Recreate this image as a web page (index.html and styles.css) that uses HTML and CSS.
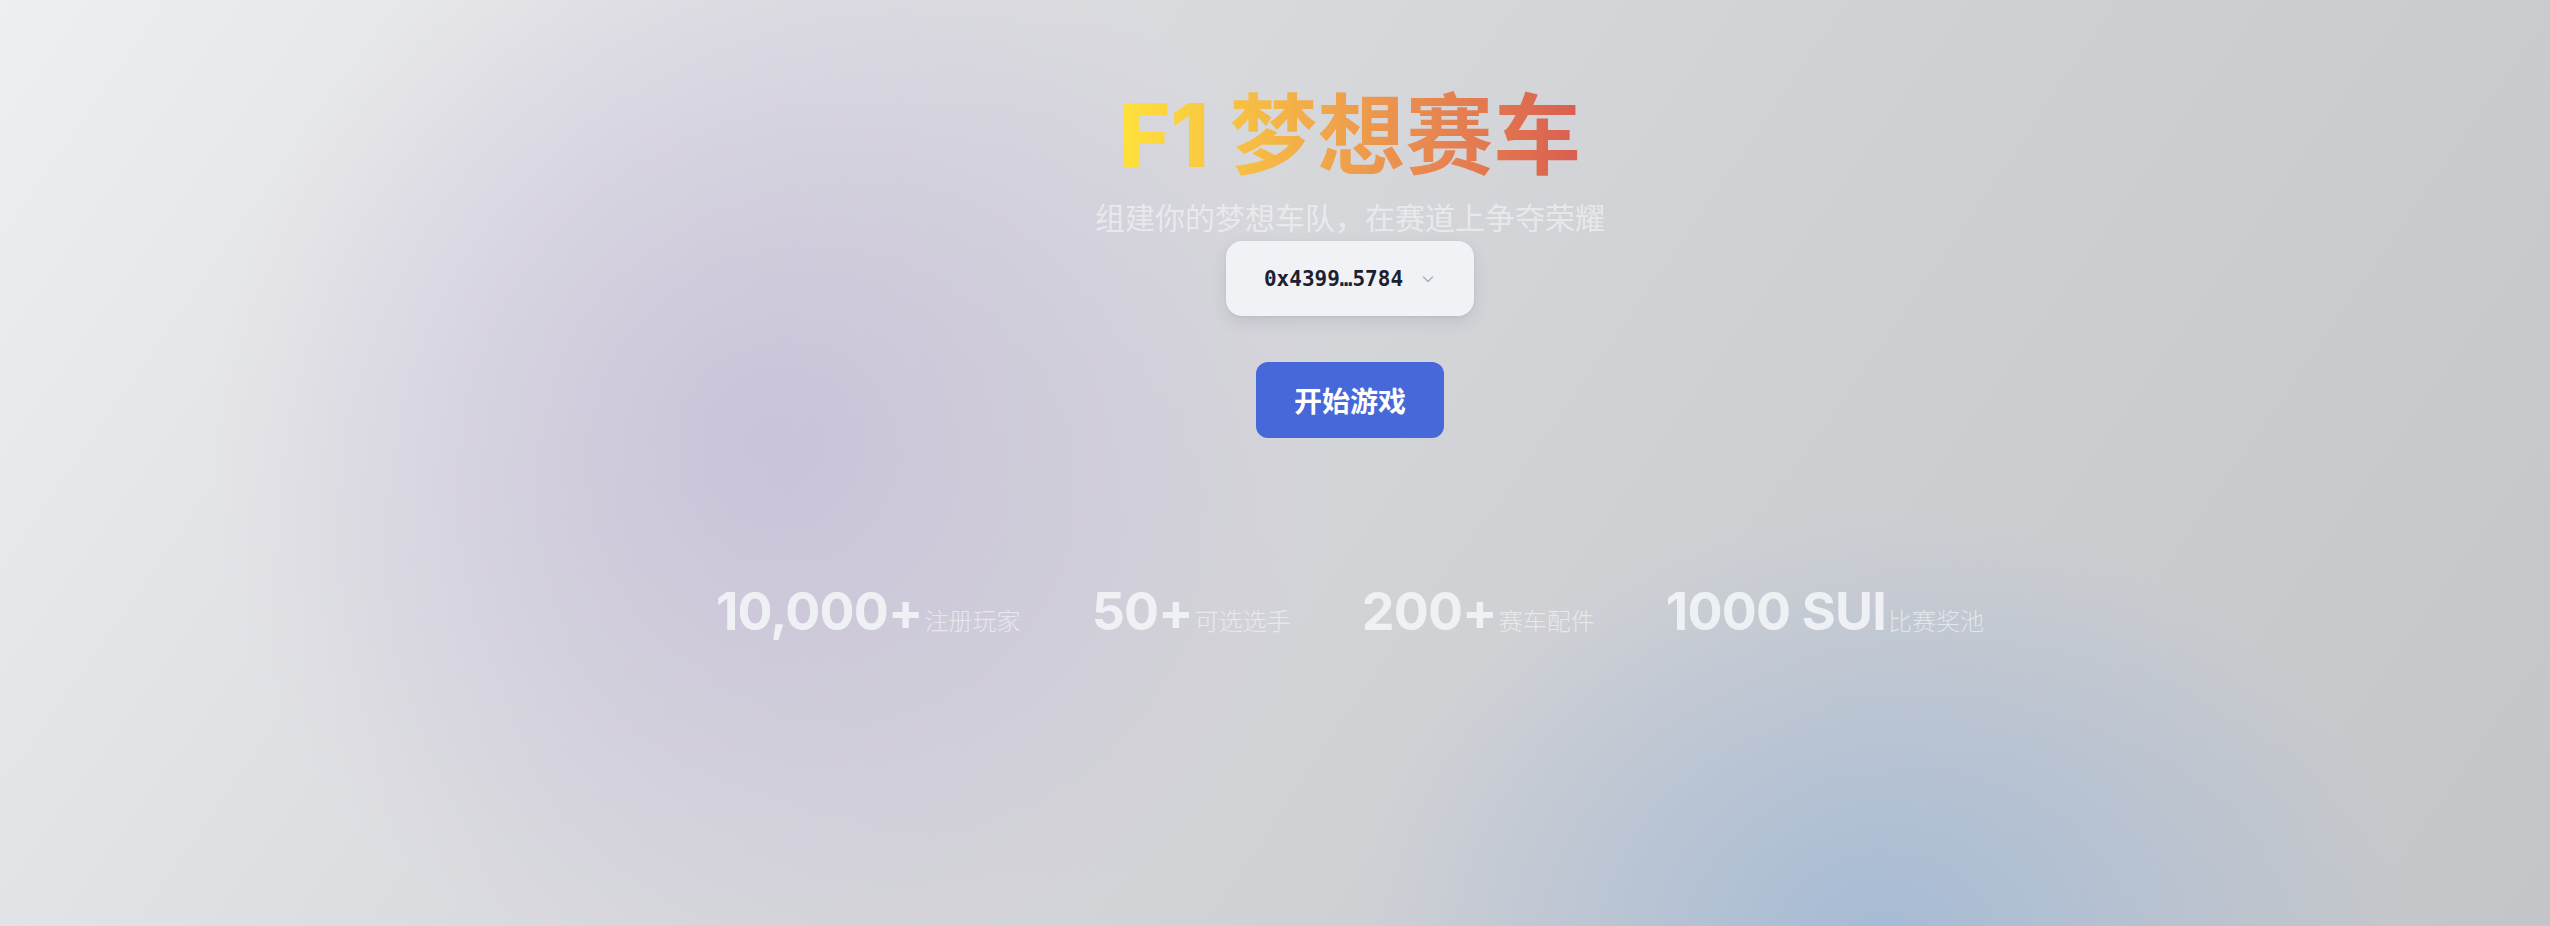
FILE: index.html
```html
<!DOCTYPE html>
<html lang="zh-CN">
<head>
<meta charset="utf-8">
<title>F1 梦想赛车</title>
<link rel="stylesheet" href="styles.css">
</head>
<body>
<main class="page">
  <section class="hero">
    <h1 class="title"><span class="title-en">F1</span> 梦想赛车</h1>
    <p class="subtitle">组建你的梦想车队，在赛道上争夺荣耀</p>
    <button class="wallet" type="button">
      <span class="wallet-addr">0x4399…5784</span>
      <svg class="chevron" width="16" height="16" viewBox="0 0 16 16" fill="none"><path d="M3.5 6l4.5 4.5L12.5 6" stroke="#a6b2c0" stroke-width="1.5" stroke-linecap="round" stroke-linejoin="round"/></svg>
    </button>
    <button class="start" type="button">开始游戏</button>
    <ul class="stats">
      <li class="stat"><span class="stat-num">10,000+</span><span class="stat-label">注册玩家</span></li>
      <li class="stat"><span class="stat-num">50+</span><span class="stat-label">可选选手</span></li>
      <li class="stat"><span class="stat-num">200+</span><span class="stat-label">赛车配件</span></li>
      <li class="stat"><span class="stat-num">1000 SUI</span><span class="stat-label">比赛奖池</span></li>
    </ul>
  </section>
</main>
</body>
</html>
```

FILE: styles.css
```css
* { box-sizing: border-box; }
html, body { margin: 0; padding: 0; }
body {
  width: 2550px;
  height: 926px;
  overflow: hidden;
  font-family: "Noto Sans CJK SC", "Noto Sans", sans-serif;
  background:
    radial-gradient(ellipse 560px 560px at 770px 440px, rgba(194,183,214,0.7), rgba(194,183,214,0) 100%),
    radial-gradient(ellipse 520px 420px at 1880px 940px, rgba(160,184,214,0.85), rgba(160,184,214,0) 100%),
    linear-gradient(125deg, #eeeff1 0%, #dadbdf 35%, #d0d1d5 60%, #c3c5c9 100%);
}
.page {
  height: 926px;
  padding-left: 150px;
}
.hero {
  display: flex;
  flex-direction: column;
  align-items: center;
  padding-top: 68px;
}
.title {
  margin: 0;
  font-size: 88px;
  line-height: 121px;
  font-weight: 700;
  font-family: "Noto Sans CJK SC", sans-serif;
  background: linear-gradient(90deg, #ffe23a 0%, #f4b446 35%, #e98a4f 65%, #d95e50 100%);
  -webkit-background-clip: text;
  background-clip: text;
  color: transparent;
}
.title-en {
  font-family: Inter, "Noto Sans", sans-serif;
  font-weight: 800;
}
.subtitle {
  margin: 0;
  font-size: 30px;
  line-height: 40px;
  color: rgba(246,247,250,0.62);
  font-weight: 400;
}
.wallet {
  margin-top: 5px;
  width: 248px;
  height: 75px;
  display: flex;
  align-items: center;
  justify-content: center;
  gap: 17px;
  border: none;
  border-radius: 16px;
  background: #f1f2f5;
  box-shadow: 0 6px 16px rgba(60,70,90,0.12), 0 1px 3px rgba(60,70,90,0.08);
  padding: 0;
  cursor: pointer;
}
.wallet-addr {
  font-family: "DejaVu Sans Mono", "Liberation Mono", monospace;
  font-weight: 700;
  font-size: 21px;
  color: #1b2130;
}
.chevron { display: block; }
.start {
  margin-top: 46px;
  width: 188px;
  height: 76px;
  border: none;
  border-radius: 12px;
  background: #4668d8;
  color: #ffffff;
  font-family: "Noto Sans CJK SC", sans-serif;
  font-weight: 700;
  font-size: 28px;
  padding: 0;
  cursor: pointer;
}
.stats {
  list-style: none;
  margin: 144px 0 0;
  padding: 0;
  display: flex;
  gap: 71px;
  align-items: baseline;
}
.stat {
  display: flex;
  align-items: baseline;
  gap: 2px;
}
.stat-num {
  font-family: Inter, "Noto Sans", sans-serif;
  font-weight: 700;
  font-size: 52px;
  letter-spacing: -0.8px;
  line-height: 60px;
  color: rgba(240,242,245,0.95);
}
.stat-label {
  font-family: "Noto Sans CJK SC", sans-serif;
  font-weight: 300;
  font-size: 24px;
  color: rgba(250,250,252,0.6);
}
```
